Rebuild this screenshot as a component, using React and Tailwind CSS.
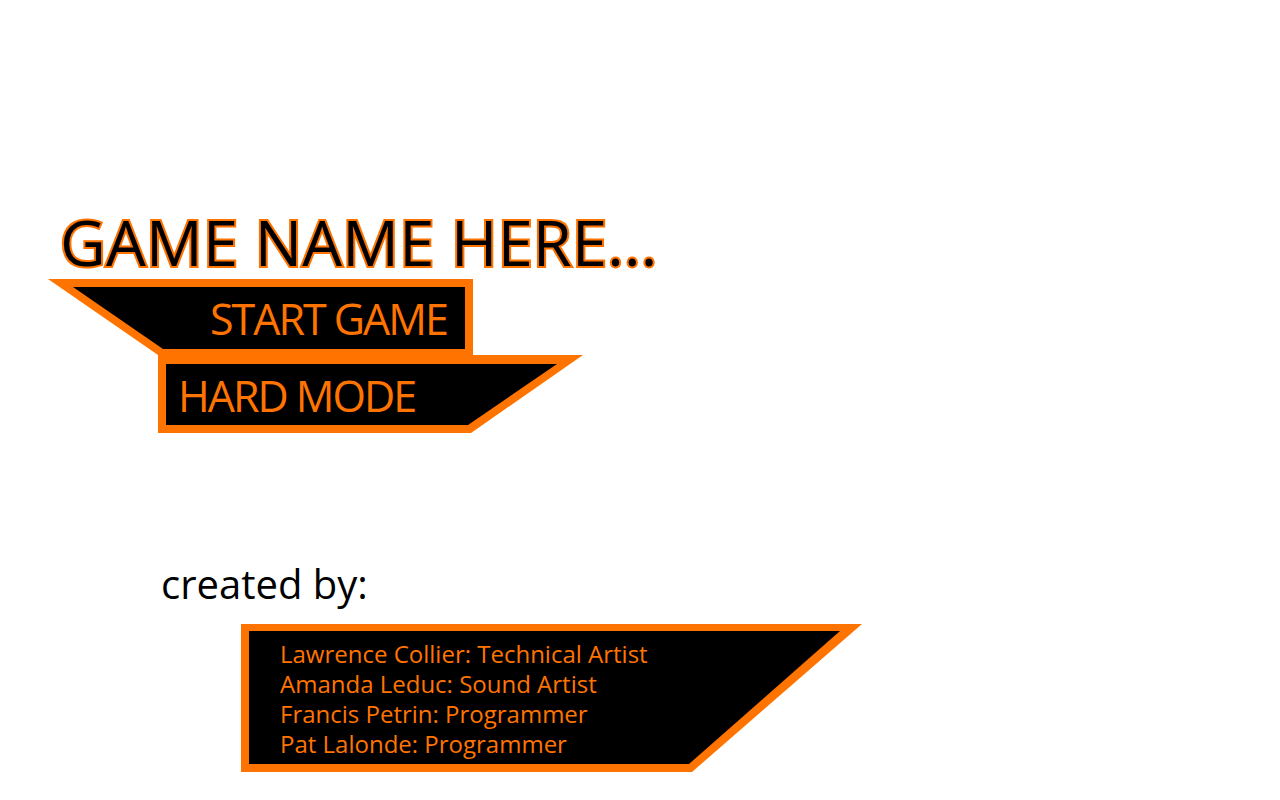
import React from "react";

const ORANGE = "#ff7400";

function Shape({ outer, inner, w, h }) {
  return (
    <svg
      className="absolute inset-0"
      width={w}
      height={h}
      viewBox={`0 0 ${w} ${h}`}
      aria-hidden="true"
    >
      <polygon points={outer} fill={ORANGE} />
      <polygon points={inner} fill="#000" />
    </svg>
  );
}

export default function App() {
  return (
    <div className="w-[1280px] h-[800px] bg-white overflow-hidden font-['Open_Sans',sans-serif]">
      <div className="flex flex-col items-start pl-[48px] pt-[210px]">
        <h1 className="ml-[12px] h-[69px] text-[63px] leading-none font-normal text-black tracking-[0.2px] [-webkit-text-stroke:4px_#ff7400] [paint-order:stroke_fill]">
          GAME NAME HERE...
        </h1>

        <div role="button" className="relative w-[425px] h-[76px] cursor-pointer">
          <Shape
            w={425}
            h={76}
            outer="0,0 425,0 425,76 110,76"
            inner="25,8 417,8 417,70 115,70"
          />
          <span className="relative block pl-[162px] pt-[18px] text-[43px] leading-none tracking-[-2px] text-[#ff7400]">
            START GAME
          </span>
        </div>

        <div role="button" className="relative ml-[110px] w-[425px] h-[78px] cursor-pointer">
          <Shape
            w={425}
            h={78}
            outer="0,0 425,0 313,78 0,78"
            inner="8,9 399,9 310,70 8,70"
          />
          <span className="relative block pl-[20px] pt-[19px] text-[43px] leading-none tracking-[-2px] text-[#ff7400]">
            HARD MODE
          </span>
        </div>

        <p className="ml-[113px] mt-[131px] h-[40px] text-[40px] leading-none text-black">
          created by:
        </p>

        <div className="relative ml-[193px] mt-[20px] w-[621px] h-[148px]">
          <Shape
            w={621}
            h={148}
            outer="0,0 621,0 451,148 0,148"
            inner="8,7 599,7 448,140 8,140"
          />
          <ul className="relative pl-[39px] pt-[15px] text-[24px] leading-[30px] text-[#ff7400]">
            <li>Lawrence Collier: Technical Artist</li>
            <li>Amanda Leduc: Sound Artist</li>
            <li>Francis Petrin: Programmer</li>
            <li>Pat Lalonde: Programmer</li>
          </ul>
        </div>
      </div>
    </div>
  );
}
